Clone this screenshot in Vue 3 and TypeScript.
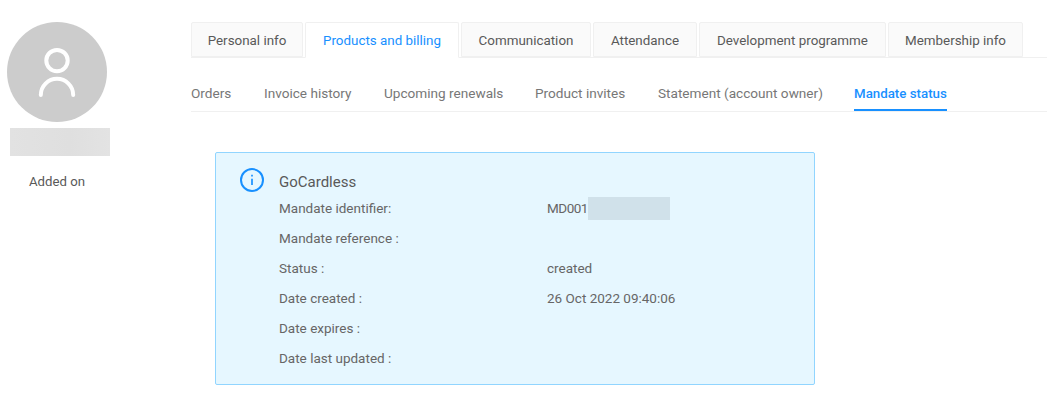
<script setup lang="ts">
const tabs = [
  { label: 'Personal info', width: 112 },
  { label: 'Products and billing', width: 154, active: true },
  { label: 'Communication', width: 130 },
  { label: 'Attendance', width: 104 },
  { label: 'Development programme', width: 187 },
  { label: 'Membership info', width: 135 },
]
const subTabs = [
  { label: 'Orders', width: 41 },
  { label: 'Invoice history', width: 88 },
  { label: 'Upcoming renewals', width: 119 },
  { label: 'Product invites', width: 91 },
  { label: 'Statement (account owner)', width: 164 },
  { label: 'Mandate status', width: 93, active: true },
]
const rows = [
  { label: 'Mandate identifier:', value: 'MD001', redacted: true },
  { label: 'Mandate reference :', value: '' },
  { label: 'Status :', value: 'created' },
  { label: 'Date created :', value: '26 Oct 2022 09:40:06' },
  { label: 'Date expires :', value: '' },
  { label: 'Date last updated :', value: '' },
]
</script>

<template>
  <div class="page">
    <aside class="side">
      <div class="avatar">
        <svg width="100" height="100" viewBox="0 0 100 100" fill="none" stroke="#fff" stroke-width="4" stroke-linecap="round">
          <circle cx="50" cy="38.600" r="10.700" />
          <path d="M33.800 73 A16.200 16.200 0 0 1 66.200 73" />
        </svg>
      </div>
      <div class="name"></div>
      <div class="added">Added on</div>
    </aside>
    <main class="main">
      <nav class="tabs">
        <div
          v-for="t in tabs"
          :key="t.label"
          class="tab"
          :class="{ active: t.active }"
          :style="{ width: t.width + 'px' }"
        >{{ t.label }}</div>
      </nav>
      <nav class="subtabs">
        <div
          v-for="s in subTabs"
          :key="s.label"
          class="subtab"
          :class="{ active: s.active }"
          :style="{ width: s.width + 'px' }"
        >{{ s.label }}</div>
      </nav>
      <section class="alert">
        <svg class="info" width="24" height="24" viewBox="0 0 24 24" fill="none" stroke="#1890ff">
          <circle cx="12" cy="12" r="11" stroke-width="2" />
          <path d="M12 10.700V17" stroke-width="1.700" />
          <path d="M12 6.700V8.600" stroke-width="1.700" />
        </svg>
        <div class="body">
          <div class="title">GoCardless</div>
          <div v-for="r in rows" :key="r.label" class="row">
            <span class="lab">{{ r.label }}</span>
            <span class="val">
              <span :class="{ code: r.redacted }">{{ r.value }}</span>
              <i v-if="r.redacted" class="blur"></i>
            </span>
          </div>
        </div>
      </section>
    </main>
  </div>
</template>

<style>
html, body { margin: 0; background: #fff; }
</style>

<style scoped>
.page {
  display: flex;
  width: 1047px;
  height: 418px;
  overflow: hidden;
  font-family: Roboto, "Liberation Sans", sans-serif;
  font-size: 14px;
  color: #595959;
}
.side {
  width: 191px;
  flex: none;
  padding: 22px 0 0 7px;
  box-sizing: border-box;
}
.avatar {
  width: 100px;
  height: 100px;
  border-radius: 50%;
  background: #ccc;
}
.avatar svg { display: block; }
.name {
  width: 100px;
  height: 28px;
  margin: 6px 0 0 3px;
  background: linear-gradient(90deg, #e2e2e2, #dfdfdf 60%, #e3e3e3);
}
.added {
  width: 100px;
  margin-top: 17px;
  text-align: center;
  line-height: 17px;
  font-size: 13.200px;
}
.main { flex: 1; padding-top: 22px; min-width: 0; }
.tabs {
  display: flex;
  gap: 2px;
  height: 36px;
  box-sizing: border-box;
  border-bottom: 1px solid #f0f0f0;
}
.tab {
  height: 35px;
  line-height: 35px;
  box-sizing: border-box;
  border: 1px solid #f0f0f0;
  border-radius: 2px 2px 0 0;
  background: #fafafa;
  color: #595959;
  font-size: 13.400px;
  text-align: center;
  white-space: nowrap;
}
.tab.active {
  height: 36px;
  background: #fff;
  border-bottom-color: #fff;
  color: #1890ff;
}
.subtabs {
  display: flex;
  gap: 32px;
  height: 54px;
  box-sizing: border-box;
  border-bottom: 1px solid #f0f0f0;
}
.subtab {
  padding-top: 26px;
  height: 53px;
  box-sizing: border-box;
  line-height: 19px;
  color: #777;
  font-size: 13.600px;
  white-space: nowrap;
}
.subtab.active {
  color: #1890ff;
  font-size: 13.300px;
  font-weight: 500;
  border-bottom: 2px solid #1890ff;
}
.alert {
  display: flex;
  width: 600px;
  height: 233px;
  box-sizing: border-box;
  margin: 40px 0 0 24px;
  padding: 15px 0 0 24px;
  border: 1px solid #91d5ff;
  border-radius: 2px;
  background: #e6f7ff;
}
.info { flex: none; }
.body { margin-left: 15px; flex: 1; }
.title {
  padding-top: 1px;
  margin-bottom: -2px;
  font-size: 15px;
  line-height: 26px;
  color: #595959;
}
.row {
  display: flex;
  height: 30px;
  line-height: 30px;
  color: #666;
  font-size: 13.500px;
}
.lab { width: 268px; flex: none; }
.val { display: flex; align-items: center; }
.code { letter-spacing: -0.500px; }
.blur {
  display: block;
  width: 82px;
  height: 23px;
  background: #d0e1ea;
}
</style>
